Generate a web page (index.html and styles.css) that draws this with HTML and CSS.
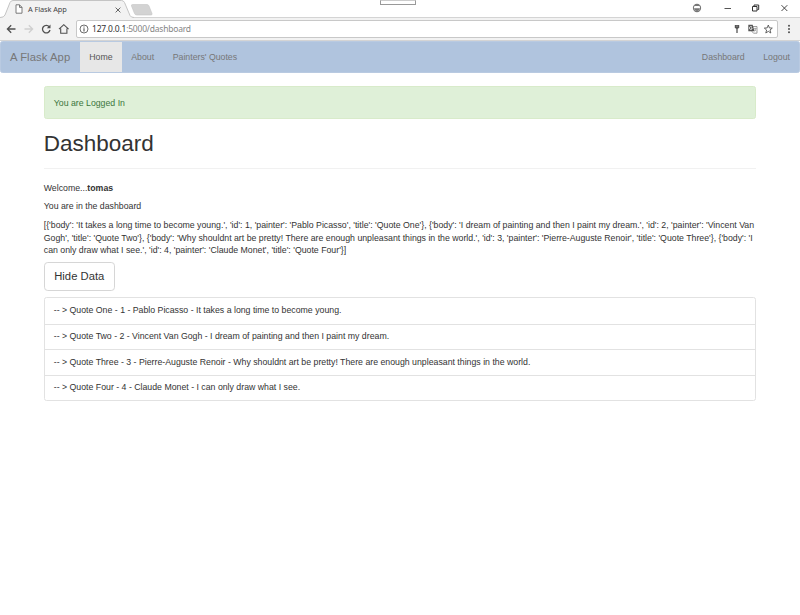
FILE: index.html
```html
<!DOCTYPE html>
<html lang="en">
<head>
<meta charset="utf-8">
<title>A Flask App</title>
<link rel="stylesheet" href="styles.css">
</head>
<body>
<header class="browser">
  <div class="tabstrip">
    <svg class="tab-shape" width="160" height="18" viewBox="0 0 160 18">
      <path d="M0 18V17.500Q4 17.500 5 15L10 2.500Q11 .5 13 .5H121.500Q123.500 .5 124.500 2.500L130 15.500Q131 17.500 134 17.500V18Z" fill="#f2f2f2"/>
      <path d="M0 17.500Q4 17.500 5 15L10 2.500Q11 .5 13 .5H121.500Q123.500 .5 124.500 2.500L130 15.500Q131 17.500 134 17.500" fill="none" stroke="#c4c4c4"/>
      <path d="M132.500 4.500H147Q148.500 4.500 149 6L152 13.500Q152.500 15 151 15H137Q135 15 134.500 13.500L131.500 6Q131 4.500 132.500 4.500Z" fill="#d3d3d3" stroke="#c4c4c4" stroke-width=".6"/>
    </svg>
    <div class="tab">
      <svg width="8" height="10" viewBox="0 0 8 10"><path d="M1 .8H4.500L7 3.300V9.200H1ZM4.500 .8V3.400H7" fill="#fff" stroke="#6b6b6b" stroke-width=".9"/></svg>
      <span class="tab-title">A Flask App</span>
      <svg class="tab-close" width="6" height="6" viewBox="0 0 6 6"><path d="M.6 .6L5.400 5.400M5.400 .6L.6 5.400" stroke="#666" stroke-width="1"/></svg>
    </div>
    <div class="handle"></div>
    <svg class="window-controls" width="110" height="18" viewBox="0 0 110 18" fill="none" stroke="#333">
      <circle cx="7" cy="8" r="3.600" stroke="#777" stroke-width="1.100"/>
      <path d="M4.500 5.500Q7 3.300 9.500 5.500V6H4.500ZM4 8.200H10L9.500 10Q7 12 4.500 10Z" fill="#777" stroke="none"/>
      <path d="M34.500 8.500H41" stroke="#555"/>
      <path d="M62.500 6.500H67V11H62.500ZM64 6V5H68.700V9.500H67.500" stroke-width="1"/>
      <path d="M91.500 5.200L97.300 11M97.300 5.200L91.500 11" stroke-width=".9"/>
    </svg>
  </div>
  <div class="toolbar">
    <svg class="nav-icons" width="76" height="22" viewBox="0 0 76 22" fill="none" stroke="#505050" stroke-width="1.300">
      <path d="M15.500 11H7.600M11.200 7.200L7.400 11L11.200 14.800"/>
      <path d="M24.500 11H32.400M28.800 7.200L32.600 11L28.800 14.800" stroke="#cfcfcf"/>
      <path d="M49.300 8.800A3.800 3.800 0 1 0 50 12"/>
      <path d="M50.500 6.500V10.200H46.800Z" fill="#505050" stroke="none"/>
      <path d="M59 11.200L63.800 6.700L68.600 11.200M60.700 10.500V15.200H66.900V10.500" stroke-width="1.100"/>
    </svg>
    <div class="omnibox">
      <svg width="10" height="10" viewBox="0 0 10 10"><circle cx="5" cy="5" r="4" fill="none" stroke="#5c5c5c" stroke-width=".9"/><path d="M5 4.300V7.400M5 2.500V3.500" stroke="#555" stroke-width="1.100"/></svg>
      <span class="url"><span class="host">127.0.0.1</span>:5000/dashboard</span>
      <svg class="page-icons" width="42" height="14" viewBox="0 0 42 14">
        <path d="M2.800 3H7.200V5.500L6 6.800H4L2.800 5.500Z" fill="#555"/><path d="M5 6V11" stroke="#555" stroke-width="1.300"/><path d="M4.400 4.200H5.600" stroke="#ddd" stroke-width=".6"/>
        <path d="M20.500 4.500H25V11.200H21.500L20 9.500Z" fill="#fff" stroke="#777" stroke-width=".7"/>
        <path d="M16.300 2.800H20.700L22.500 9.300H16.300Z" fill="#555"/>
        <path d="M20 5A1.500 1.500 0 1 0 20 7V6H18.900" fill="none" stroke="#fff" stroke-width=".7"/>
        <path d="M21.800 6.500H24.500M23.200 5.700V6.500M24 6.500Q23.500 8.500 22 9.200M22.500 7.500L24.200 9.200" fill="none" stroke="#777" stroke-width=".5"/>
        <path d="M36.300 3L37.400 5.900L40.300 6.100L38 8L38.800 11L36.300 9.400L33.800 11L34.600 8L32.300 6.100L35.200 5.900Z" fill="none" stroke="#555" stroke-width=".9"/>
      </svg>
    </div>
    <svg class="menu" width="22" height="22" viewBox="0 0 22 22" fill="#505050"><circle cx="11" cy="7.700" r="1"/><circle cx="11" cy="11" r="1"/><circle cx="11" cy="14.300" r="1"/></svg>
  </div>
</header>
<nav class="navbar">
  <a class="brand">A Flask App</a>
  <a class="item active">Home</a>
  <a class="item">About</a>
  <a class="item">Painters' Quotes</a>
  <a class="item push">Dashboard</a>
  <a class="item last">Logout</a>
</nav>
<main class="container">
  <div class="alert">You are Logged In</div>
  <h1>Dashboard</h1>
  <p>Welcome...<strong>tomas</strong></p>
  <p>You are in the dashboard</p>
  <p class="data">[{'body': 'It takes a long time to become young.', 'id': 1, 'painter': 'Pablo Picasso', 'title': 'Quote One'}, {'body': 'I dream of painting and then I paint my dream.', 'id': 2, 'painter': 'Vincent Van<br>Gogh', 'title': 'Quote Two'}, {'body': 'Why shouldnt art be pretty! There are enough unpleasant things in the world.', 'id': 3, 'painter': 'Pierre-Auguste Renoir', 'title': 'Quote Three'}, {'body': 'I<br>can only draw what I see.', 'id': 4, 'painter': 'Claude Monet', 'title': 'Quote Four'}]</p>
  <button class="btn">Hide Data</button>
  <ul class="list">
    <li>-- &gt; Quote One - 1 - Pablo Picasso - It takes a long time to become young.</li>
    <li>-- &gt; Quote Two - 2 - Vincent Van Gogh - I dream of painting and then I paint my dream.</li>
    <li>-- &gt; Quote Three - 3 - Pierre-Auguste Renoir - Why shouldnt art be pretty! There are enough unpleasant things in the world.</li>
    <li>-- &gt; Quote Four - 4 - Claude Monet - I can only draw what I see.</li>
  </ul>
</main>
</body>
</html>
```
FILE: styles.css
```css
* { box-sizing: border-box; }
body {
  margin: 0;
  height: 615px;
  overflow: hidden;
  background: #fff;
  color: #333;
  font: 8.75px/12.5px "Liberation Sans", Arial, sans-serif;
}
svg { display: block; flex: none; }

/* Browser frame */
.browser { height: 41px; }
.tabstrip {
  position: relative;
  display: flex;
  height: 18px;
  box-shadow: inset 0 -1px #d4d4d4;
}
.tab-shape { position: absolute; left: 0; top: 0; }
.tab {
  position: relative;
  display: flex;
  align-items: center;
  width: 130px;
  height: 18px;
  padding-left: 15px;
}
.tab-title {
  margin-left: 5px;
  font: 7.4px/10px "Noto Sans", sans-serif;
  letter-spacing: -0.1px;
  color: #444;
}
.tab-close { margin: 1px 9px 0 auto; }
.handle {
  width: 36px;
  height: 5px;
  margin-left: 250px;
  border: 1px solid #999;
  border-top-color: #ccc;
}
.window-controls { margin-left: auto; }
.toolbar {
  display: flex;
  align-items: center;
  height: 23px;
  background: #f2f2f2;
  border-bottom: 1px solid #d4d4d4;
}
.omnibox {
  display: flex;
  align-items: center;
  flex: 1;
  height: 18px;
  padding: 0 3px 0 2px;
  background: #fff;
  border: 1px solid #c8c8c8;
  border-radius: 2px;
}
.url {
  margin-left: 3px;
  font: 8.5px/12px "Noto Sans", sans-serif;
  letter-spacing: -0.21px;
  color: #858585;
}
.host { color: #333; }
.page-icons { margin-left: auto; }

/* Site navigation */
.navbar {
  display: flex;
  height: 32px;
  background: #b0c4de;
  border: 1px solid #b9cae1;
  border-radius: 2.5px;
  color: #777;
}
.brand {
  width: 79px;
  padding: 9.4px 0 0 9px;
  font-size: 11.25px;
  letter-spacing: 0.08px;
}
.item { padding: 9.4px 9.3px 0; }
.active { background: #e7e7e7; color: #555; }
.push { margin-left: auto; }
.last { padding-right: 9px; }

/* Page content */
.container { width: 712.5px; margin: 13.25px auto 0; }
.alert {
  height: 32.5px;
  padding: 9.4px 9px;
  margin-bottom: 12.5px;
  background: #dff0d8;
  border: 1px solid #d8ebca;
  border-radius: 2.5px;
  color: #3c763d;
}
h1 {
  height: 37.5px;
  margin: 0 0 12.75px;
  padding-top: 0.8px;
  border-bottom: 1px solid #f1f1f1;
  font-size: 22.5px;
  font-weight: 500;
  line-height: 24.75px;
}
p { margin: 0 0 6.25px; white-space: nowrap; }
.btn {
  display: block;
  height: 28.75px;
  margin-top: -0.5px;
  padding: 0 9.5px;
  background: #fff;
  border: 1px solid #d6d6d6;
  border-radius: 3.75px;
  color: #333;
  font: 11.25px/15px "Liberation Sans", Arial, sans-serif;
}
.list {
  margin: 6px 0 0;
  padding: 0;
  list-style: none;
  border: 1px solid #e2e2e2;
  border-radius: 2.5px;
}
.list li { height: 25.6px; padding: 6px 9px; }
.list li:last-child { height: 25px; }
.list li + li { border-top: 1px solid #e2e2e2; padding-top: 5.4px; }
```
